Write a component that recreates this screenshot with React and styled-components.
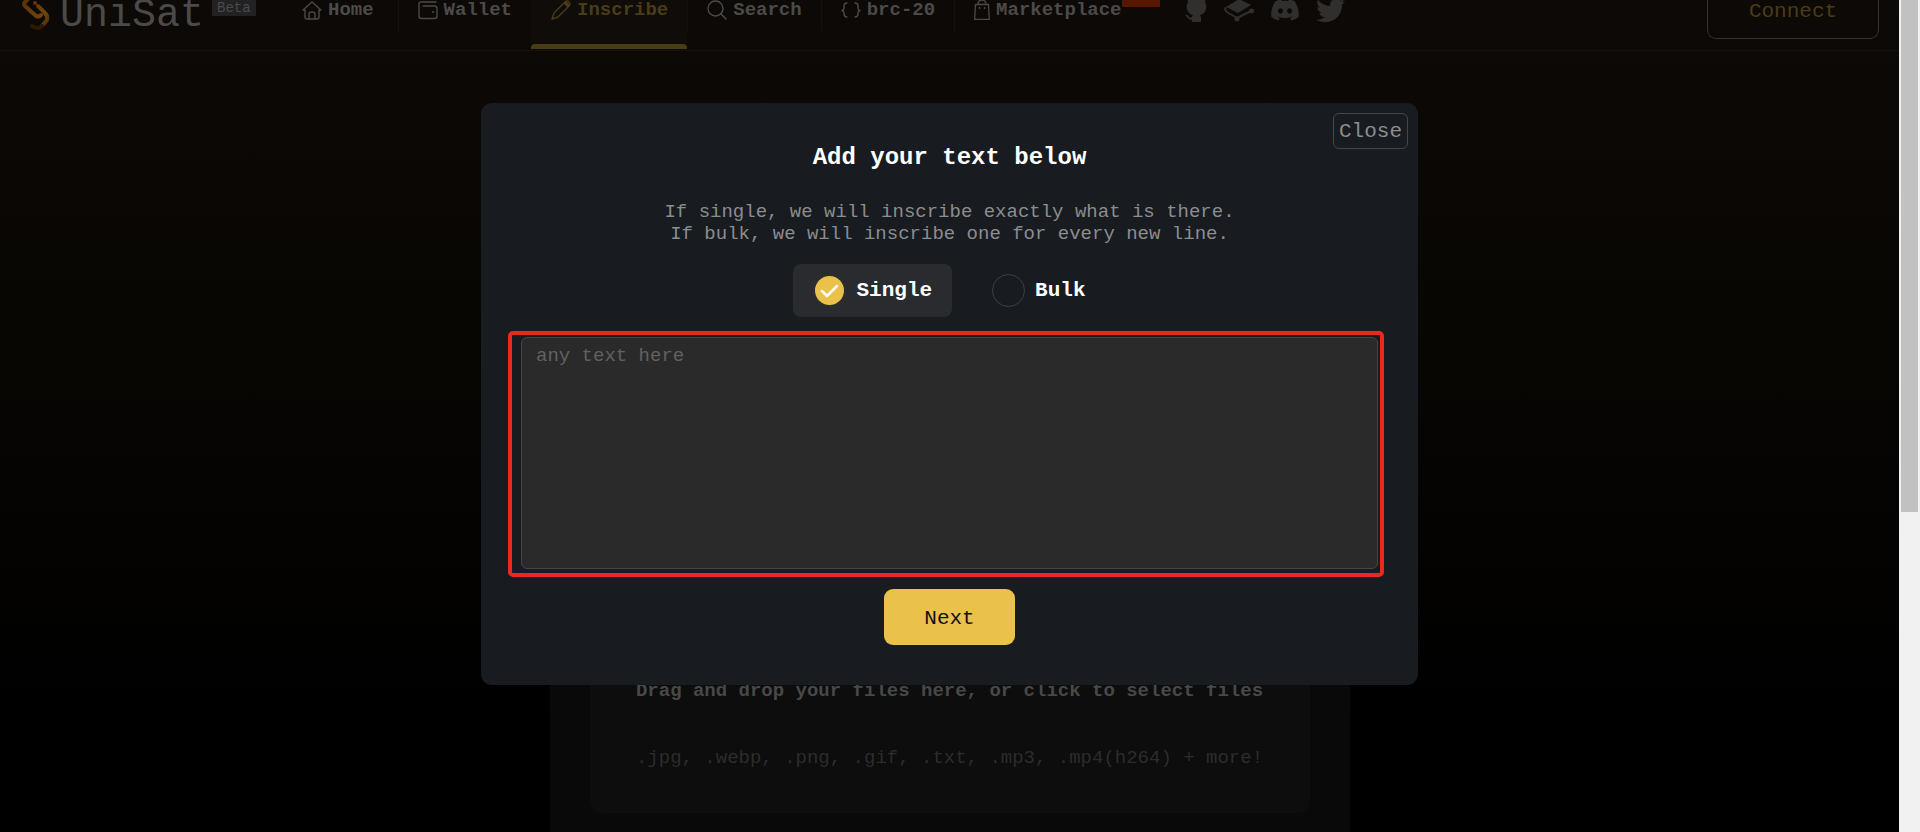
import { useState } from "react";
import styled, { createGlobalStyle, ThemeProvider } from "styled-components";
import { FaDiscord, FaTwitter } from "react-icons/fa";

const theme = {
  primary: "#e9c14b",
  primaryDim: "#4a3c18",
  muted: "#4b4a49",
  icon: "#302f2e",
  font: `"Liberation Mono", monospace`,
};

const GlobalStyle = createGlobalStyle`
  * {
    box-sizing: border-box;
  }
  body {
    margin: 0;
    background: #000;
  }
  body, button, textarea {
    font-family: ${theme.font};
    font-size: 19px;
    line-height: 22px;
  }
`;

const Window = styled.div`
  display: flex;
  height: 100vh;
  overflow: hidden;
`;

const Page = styled.div`
  flex: 1;
  min-width: 0;
  display: flex;
  flex-direction: column;
  overflow: hidden;
  background: linear-gradient(#0d0906 0%, #080603 40%, #000 88%);
`;

const Header = styled.header`
  display: flex;
  flex-shrink: 0;
  align-items: flex-start;
  height: 51px;
  padding: 0 20px;
  border-bottom: 1px solid #13100d;
`;

const Brand = styled.a`
  display: flex;
  align-items: flex-start;
  width: 262px;
  color: ${(props) => props.theme.muted};
  text-decoration: none;
`;

const BrandName = styled.span`
  margin: 0 8px;
  font-size: 40px;
  line-height: 32px;
`;

const Beta = styled.span`
  padding: 0 5px;
  font-size: 14px;
  line-height: 16px;
  background: #222224;
`;

const Nav = styled.nav`
  display: flex;
  align-items: flex-start;
`;

const NavLink = styled.a`
  position: relative;
  display: flex;
  align-items: flex-start;
  gap: 6px;
  height: 49px;
  padding: 0 19px 0 20px;
  font-weight: 700;
  line-height: 20px;
  text-decoration: none;
  color: ${(props) =>
    props.$active ? props.theme.primaryDim : props.theme.muted};
  background: ${(props) => props.$active && "#0f0c09"};
  &:first-child {
    padding-right: 24px;
  }
  &::after {
    content: "";
    display: ${(props) => (props.$active ? "block" : "none")};
    position: absolute;
    left: 0;
    right: 0;
    bottom: 0;
    height: 5px;
    border-radius: 4px 4px 0 0;
    background: #4a3d15;
  }
`;

const Divider = styled.span`
  width: 1px;
  height: 31px;
  margin-right: -1px;
  background: #14110e;
`;

const NewBadge = styled.span`
  width: 38px;
  height: 7px;
  margin-left: -6px;
  background: #551700;
`;

const Socials = styled.div`
  display: flex;
  align-items: center;
  gap: 16px;
  height: 20px;
  margin-left: 5px;
`;

const SocialLink = styled.a`
  display: flex;
  color: ${(props) => props.theme.icon};
`;

const ConnectButton = styled.button`
  width: 172px;
  height: 39px;
  margin-left: auto;
  padding: 0 0 14px;
  border: 1px solid #35322f;
  border-top: 0;
  border-radius: 0 0 9px 9px;
  background: transparent;
  color: ${(props) => props.theme.primaryDim};
  font-size: 21px;
`;

const Main = styled.main`
  flex: 1;
  display: flex;
  flex-direction: column;
  align-items: center;
  padding-top: 309px;
`;

const Card = styled.section`
  flex: 1 0 auto;
  width: 100%;
  max-width: 800px;
  padding: 40px;
  background: #090909;
`;

const DropZone = styled.button`
  display: flex;
  flex-direction: column;
  align-items: center;
  gap: 45px;
  width: 100%;
  padding: 280px 20px 44px;
  border: 0;
  border-radius: 12px;
  background: #0d0d0d;
  color: #2c2c2c;
`;

const DropTitle = styled.span`
  font-weight: 700;
  color: #484848;
`;

const Overlay = styled.div`
  position: fixed;
  inset: 0 21px 0 0;
  display: flex;
  justify-content: center;
  align-items: flex-start;
  padding-top: 103px;
`;

const Modal = styled.div`
  position: relative;
  display: flex;
  flex-direction: column;
  align-items: center;
  width: 100%;
  max-width: 937px;
  padding: 40px;
  border-radius: 11px;
  background: #181b1f;
`;

const CloseButton = styled.button`
  position: absolute;
  top: 10px;
  right: 10px;
  height: 36px;
  padding: 2px 5px 0;
  border: 1px solid #44474a;
  border-radius: 6px;
  background: transparent;
  color: #8b8d8f;
  font-size: 21px;
`;

const Title = styled.h1`
  margin: 0 0 28px;
  font-size: 24px;
  line-height: 30px;
  color: #fff;
`;

const Description = styled.p`
  margin: 0 0 19px;
  text-align: center;
  color: #8b8d8f;
`;

const Options = styled.div`
  display: flex;
  gap: 20px;
  margin-bottom: 20px;
`;

const Option = styled.label`
  display: flex;
  align-items: center;
  gap: 10px;
  height: 53px;
  padding: 0 20px;
  border-radius: 8px;
  font-size: 21px;
  font-weight: 700;
  color: #fff;
  background: ${(props) => props.$active && "#292b2f"};
`;

const RadioBox = styled.span`
  position: relative;
  display: flex;
  svg {
    position: absolute;
    inset: 0;
    pointer-events: none;
  }
`;

const Radio = styled.input`
  appearance: none;
  width: 33px;
  height: 33px;
  margin: 0;
  border: 1px solid #3d4043;
  border-radius: 50%;
  &:checked {
    border: 1px solid #2f3032;
    padding: 1px;
    background: ${(props) => props.theme.primary} content-box;
  }
`;

const Field = styled.div`
  position: relative;
  width: 100%;
  margin-bottom: 20px;
`;

const TextArea = styled.textarea`
  display: block;
  width: 100%;
  height: 232px;
  padding: 7px 14px;
  border: 1px solid #454545;
  border-radius: 6px;
  outline: none;
  resize: none;
  background: #2a2a2a;
  color: #fff;
  &::placeholder {
    color: #616161;
    opacity: 1;
  }
`;

const Highlight = styled.div`
  position: absolute;
  inset: -6px -6px -8px -13px;
  border: 4px solid #e62a20;
  border-radius: 5px;
  pointer-events: none;
`;

const NextButton = styled.button`
  width: 131px;
  height: 56px;
  padding: 3px 0 0;
  border: 0;
  border-radius: 9px;
  background: ${(props) => props.theme.primary};
  color: #111;
  font-size: 21px;
`;

const ScrollTrack = styled.div`
  width: 21px;
  padding: 0 2px;
  background: #f1f1f1;
`;

const ScrollThumb = styled.div`
  height: 512px;
  background: #c1c1c1;
`;

const Icon = ({ children }) => (
  <svg
    width="20"
    height="20"
    viewBox="0 0 20 20"
    fill="none"
    stroke="currentColor"
    strokeWidth="1.4"
    strokeLinecap="round"
    strokeLinejoin="round"
    aria-hidden="true"
  >
    {children}
  </svg>
);

const LogoMark = () => (
  <svg width="32" height="32" viewBox="0 0 32 32" fill="none" aria-hidden="true">
    <defs>
      <linearGradient id="mark" x1="0" y1="0" x2="32" y2="32" gradientUnits="userSpaceOnUse">
        <stop offset="0" stopColor="#55300c" />
        <stop offset="0.6" stopColor="#70440c" />
        <stop offset="1" stopColor="#3a2408" />
      </linearGradient>
    </defs>
    <g stroke="url(#mark)" strokeWidth="4" strokeLinecap="round" strokeLinejoin="round">
      <path d="M9 -2 L5 2 Q3 4 5 6 L15 15 Q18 18 21 15" />
      <path d="M18 6 L25 13 Q28 16 27 20 L22 26" />
    </g>
    <path d="M22 26 Q18 30 12 26" stroke="#2c1a07" strokeWidth="4" strokeLinecap="round" />
    <circle cx="15" cy="3" r="2" fill="#70300c" />
  </svg>
);

const icons = {
  home: (
    <Icon>
      <path d="M1 10 L10 2 L19 10 H17 V17 Q17 19 15 19 H5 Q3 19 3 17 V10 Z" />
      <path d="M7 19 V14 Q7 12 10 12 Q13 12 13 14 V19" />
    </Icon>
  ),
  wallet: (
    <Icon>
      <path d="M18 2 H3 Q1 2 1 4 V16 Q1 18.500 3.500 18.500 H16.500 Q19 18.500 19 16 V8.500 Q19 6 16.500 6 H5" />
      <path d="M15 12 H15.200" strokeWidth="2" />
    </Icon>
  ),
  inscribe: (
    <Icon>
      <path d="M1 19 L3 13 L14 2 Q16 0 18 2 Q20 4 18 6 L7 17 Z M13 3 L17 7" />
      <path d="M15 3 L17 5" strokeWidth="3" />
    </Icon>
  ),
  search: (
    <Icon>
      <circle cx="8.5" cy="8.5" r="7.5" />
      <path d="M14 14 L19 19" />
    </Icon>
  ),
  brc: (
    <Icon>
      <path d="M6 3 Q3 3 3 6 V8 Q3 10 1 10.500 Q3 11 3 13 V14 Q3 17 6 17" />
      <path d="M14 3 Q17 3 17 6 V8 Q17 10 19 10.500 Q17 11 17 13 V14 Q17 17 14 17" />
    </Icon>
  ),
  market: (
    <svg width="16" height="20" viewBox="0 0 16 20" fill="none" stroke="currentColor" strokeWidth="1.3" aria-hidden="true">
      <path d="M1.500 4.500 H14.500 L15.300 19.300 H0.700 Z" />
      <path d="M4 4.500 Q4 0 8 0 Q12 0 12 4.500" />
      <path d="M5.500 7 V9 M10.500 7 V9" />
    </svg>
  ),
};

// silhouette with the small tail on the left
const GithubIcon = () => (
  <svg width="24" height="26" viewBox="0 0 24 26" fill="currentColor" aria-hidden="true">
    <path d="M4 0 Q7 0 9 2 Q12 1 16 2 Q18 0 21 0 Q22 3 21 5 Q23 8 22 12 Q21 17 16 18 Q17 19 17 21 V25 H8 V23 Q4 23 3 20 Q2 19 1 18 Q4 17 5 20 Q6 21 8 20 Q8 19 9 18 Q4 17 3 12 Q2 8 4 5 Q3 3 4 0 Z" />
  </svg>
);

// open book with a bookmark knob
const GitbookIcon = () => (
  <svg width="30" height="24" viewBox="0 0 30 24" fill="none" aria-hidden="true">
    <path d="M15 1 L27 7 L14 15 L2 9 Z" fill="currentColor" />
    <g stroke="currentColor" strokeWidth="2" strokeLinejoin="round">
      <path d="M2 9 Q0 12 3 14 L13 20 L27 13" />
    </g>
    <circle cx="27.500" cy="13" r="2.500" fill="currentColor" />
    <circle cx="13" cy="21" r="2.500" fill="currentColor" />
  </svg>
);

const navItems = [
  { label: "Home", icon: "home" },
  { label: "Wallet", icon: "wallet" },
  { label: "Inscribe", icon: "inscribe", active: true },
  { label: "Search", icon: "search" },
  { label: "brc-20", icon: "brc" },
  { label: "Marketplace", icon: "market", badge: true },
];

const socials = [
  { name: "GitHub", icon: <GithubIcon /> },
  { name: "GitBook", icon: <GitbookIcon /> },
  { name: "Discord", icon: <FaDiscord size={30} /> },
  { name: "Twitter", icon: <FaTwitter size={29} /> },
];

const NavItem = ({ item, first }) => (
  <>
    {!first && <Divider />}
    <NavLink href="#" $active={item.active}>
      {icons[item.icon]}
      {item.label}
      {item.badge && <NewBadge />}
    </NavLink>
  </>
);

const modes = ["Single", "Bulk"];

const App = () => {
  const [mode, setMode] = useState("Single");
  const [text, setText] = useState("");

  return (
    <ThemeProvider theme={theme}>
      <GlobalStyle />
      <Window>
        <Page>
          <Header>
            <Brand href="#">
              <LogoMark />
              <BrandName>UniSat</BrandName>
              <Beta>Beta</Beta>
            </Brand>
            <Nav>
              {navItems.map((item, i) => (
                <NavItem key={item.label} item={item} first={i === 0} />
              ))}
            </Nav>
            <Socials>
              {socials.map((social) => (
                <SocialLink href="#" key={social.name} aria-label={social.name}>
                  {social.icon}
                </SocialLink>
              ))}
            </Socials>
            <ConnectButton>Connect</ConnectButton>
          </Header>
          <Main>
            <Card>
              <DropZone>
                <DropTitle>
                  Drag and drop your files here, or click to select files
                </DropTitle>
                <span>
                  .jpg, .webp, .png, .gif, .txt, .mp3, .mp4(h264) + more!
                </span>
              </DropZone>
            </Card>
          </Main>
        </Page>
        <ScrollTrack>
          <ScrollThumb />
        </ScrollTrack>
      </Window>
      <Overlay>
        <Modal role="dialog" aria-labelledby="modal-title">
          <CloseButton>Close</CloseButton>
          <Title id="modal-title">Add your text below</Title>
          <Description>
            If single, we will inscribe exactly what is there.
            <br />
            If bulk, we will inscribe one for every new line.
          </Description>
          <Options>
            {modes.map((name) => (
              <Option key={name} $active={mode === name}>
                <RadioBox>
                  <Radio
                    type="radio"
                    name="mode"
                    checked={mode === name}
                    onChange={() => setMode(name)}
                  />
                  {mode === name && (
                    <svg width="33" height="33" viewBox="0 0 33 33" fill="none">
                      <path
                        d="M9 17 L14 22 L24 12"
                        stroke="#fff"
                        strokeWidth="2.5"
                        strokeLinecap="round"
                        strokeLinejoin="round"
                      />
                    </svg>
                  )}
                </RadioBox>
                {name}
              </Option>
            ))}
          </Options>
          <Field>
            <TextArea
              aria-label="Text to inscribe"
              placeholder="any text here"
              value={text}
              onChange={(e) => setText(e.target.value)}
            />
            <Highlight />
          </Field>
          <NextButton>Next</NextButton>
        </Modal>
      </Overlay>
    </ThemeProvider>
  );
};

export default App;
